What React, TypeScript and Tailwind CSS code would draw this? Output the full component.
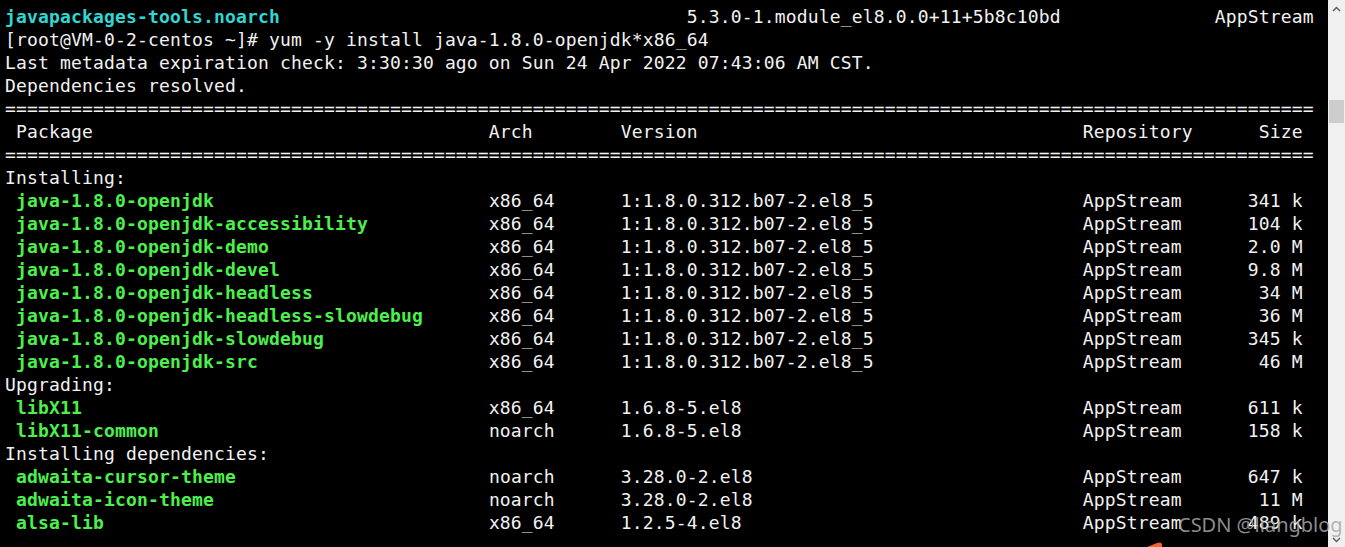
const SEP = "=".repeat(119);

type Pkg = { name: string; arch: string; version: string; size: string };

const groups: { title: string; items: Pkg[] }[] = [
  {
    title: "Installing:",
    items: [
      { name: "java-1.8.0-openjdk", arch: "x86_64", version: "1:1.8.0.312.b07-2.el8_5", size: "341 k" },
      { name: "java-1.8.0-openjdk-accessibility", arch: "x86_64", version: "1:1.8.0.312.b07-2.el8_5", size: "104 k" },
      { name: "java-1.8.0-openjdk-demo", arch: "x86_64", version: "1:1.8.0.312.b07-2.el8_5", size: "2.0 M" },
      { name: "java-1.8.0-openjdk-devel", arch: "x86_64", version: "1:1.8.0.312.b07-2.el8_5", size: "9.8 M" },
      { name: "java-1.8.0-openjdk-headless", arch: "x86_64", version: "1:1.8.0.312.b07-2.el8_5", size: "34 M" },
      { name: "java-1.8.0-openjdk-headless-slowdebug", arch: "x86_64", version: "1:1.8.0.312.b07-2.el8_5", size: "36 M" },
      { name: "java-1.8.0-openjdk-slowdebug", arch: "x86_64", version: "1:1.8.0.312.b07-2.el8_5", size: "345 k" },
      { name: "java-1.8.0-openjdk-src", arch: "x86_64", version: "1:1.8.0.312.b07-2.el8_5", size: "46 M" },
    ],
  },
  {
    title: "Upgrading:",
    items: [
      { name: "libX11", arch: "x86_64", version: "1.6.8-5.el8", size: "611 k" },
      { name: "libX11-common", arch: "noarch", version: "1.6.8-5.el8", size: "158 k" },
    ],
  },
  {
    title: "Installing dependencies:",
    items: [
      { name: "adwaita-cursor-theme", arch: "noarch", version: "3.28.0-2.el8", size: "647 k" },
      { name: "adwaita-icon-theme", arch: "noarch", version: "3.28.0-2.el8", size: "11 M" },
      { name: "alsa-lib", arch: "x86_64", version: "1.2.5-4.el8", size: "489 k" },
    ],
  },
];

function Row({ p }: { p: Pkg }) {
  const rest =
    " ".repeat(43 - p.name.length) +
    p.arch.padEnd(12) +
    p.version.padEnd(42) +
    "AppStream" +
    p.size.padStart(11);
  return (
    <div>
      {" "}
      <span className="font-bold text-[#4cf04c]">{p.name}</span>
      {rest}
    </div>
  );
}

export default function App() {
  return (
    <div className="relative flex h-[547px] w-[1345px] overflow-hidden bg-black">
      <div className="flex-1 overflow-hidden bg-black pl-[5px] pt-[5px] font-['DejaVu_Sans_Mono',monospace] text-[18px] leading-[23px] tracking-[0.16px] whitespace-pre text-[#f2f2f2]">
        <div>
          <span className="font-bold text-[#30d6d2]">javapackages-tools.noarch</span>
          {" ".repeat(37)}
          {"5.3.0-1.module_el8.0.0+11+5b8c10bd".padEnd(48)}AppStream
        </div>
        <div>[root@VM-0-2-centos ~]# yum -y install java-1.8.0-openjdk*x86_64</div>
        <div>Last metadata expiration check: 3:30:30 ago on Sun 24 Apr 2022 07:43:06 AM CST.</div>
        <div>Dependencies resolved.</div>
        <div>{SEP}</div>
        <div>
          {" Package".padEnd(44) + "Arch".padEnd(12) + "Version".padEnd(42) + "Repository" + "Size".padStart(10)}
        </div>
        <div>{SEP}</div>
        {groups.map((g) => (
          <div key={g.title}>
            <div>{g.title}</div>
            {g.items.map((p) => (
              <Row key={p.name} p={p} />
            ))}
          </div>
        ))}
      </div>

      {/* scrollbar */}
      <div className="flex w-[17px] flex-col items-center bg-[#f0f0f0]">
        <svg width="9" height="6" viewBox="0 0 9 6" className="mt-[6px]">
          <path d="M1 5 L4.5 1.5 L8 5" fill="none" stroke="#606060" strokeWidth="1.5" />
        </svg>
        <div className="mt-[88px] h-[23px] w-[15px] bg-[#cdcdcd]" />
        <div className="flex-1" />
        <svg width="9" height="6" viewBox="0 0 9 6" className="mb-[4px]">
          <path d="M1 1 L4.5 4.5 L8 1" fill="none" stroke="#606060" strokeWidth="1.5" />
        </svg>
      </div>

      {/* watermark */}
      <div className="absolute left-[1178px] top-[511px] font-['Noto_Sans',sans-serif] text-[20px] leading-[28px] text-[#a8a8a8]/85">
        CSDN @liangblog
      </div>
      {/* annotation arrow tip */}
      <svg className="absolute left-[1146px] top-[542px]" width="18" height="5" viewBox="0 0 18 5">
        <path d="M1 5 L11 1 Q15 -0.5 16 2 L16 5 Z" fill="#f2642e" />
      </svg>
    </div>
  );
}
